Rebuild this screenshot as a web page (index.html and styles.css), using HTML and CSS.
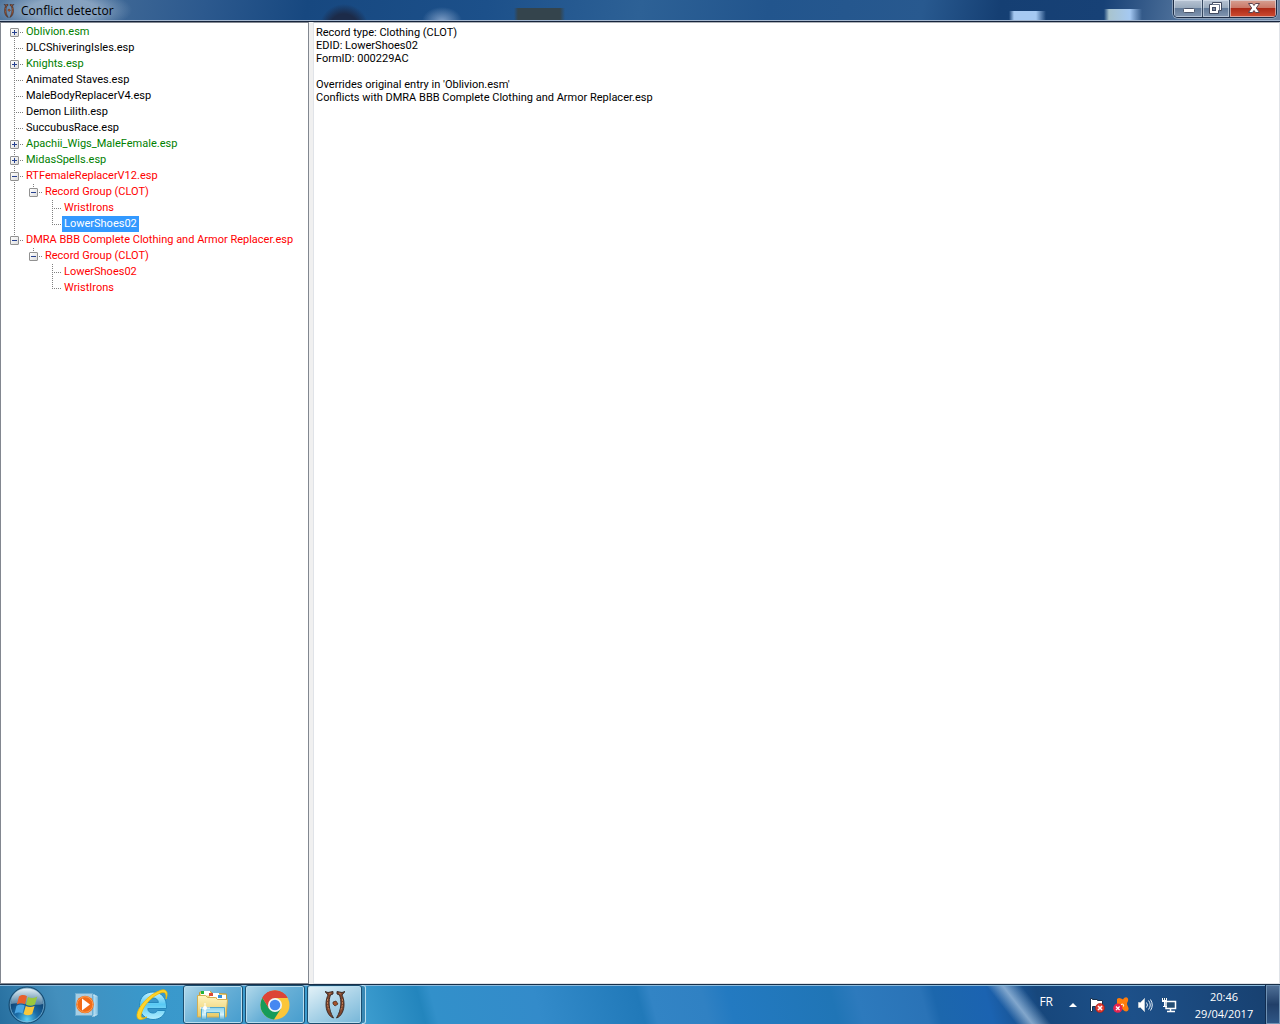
FILE: index.html
```html
<!DOCTYPE html>
<html lang="en">
<head>
<meta charset="utf-8">
<title>Conflict detector</title>
<link rel="stylesheet" href="styles.css">
</head>
<body>
<header class="titlebar">
  <svg class="app-icon" width="12" height="14" viewBox="0 0 20 28"><use href="#gate"/></svg>
  <h1>Conflict detector</h1>
  <div class="window-controls">
    <button class="minimize" aria-label="Minimize"><svg width="28" height="17"><rect x="9.5" y="8.5" width="11" height="4" rx="1" fill="#fff" stroke="#4c566b"/></svg></button>
    <button class="restore" aria-label="Restore"><svg width="26" height="17"><path d="M9.500 2.500h9v8h-3v3h-9v-9h3z" fill="#fff" stroke="#414a60"/><path d="M9 4.500h7.500v6" fill="none" stroke="#69748a"/><rect x="9.500" y="7.500" width="3" height="3" fill="#7d8ba4" stroke="#414a60"/></svg></button>
    <button class="close" aria-label="Close"><svg width="46" height="17"><path d="M18.500 3.500h4l1.500 2 1.500-2h4l-3.200 4.500 3.200 4.500h-4l-1.500-2-1.500 2h-4l3.200-4.500z" fill="#fff" stroke="#5c4450"/></svg></button>
  </div>
</header>

<main class="workspace">
  <nav class="tree" aria-label="Plugins">
    <ul>
      <li class="safe"><div class="row"><span class="guide first"><button class="toggle plus" aria-label="Expand"></button></span><span class="label">Oblivion.esm</span></div></li>
      <li><div class="row"><span class="guide"></span><span class="label">DLCShiveringIsles.esp</span></div></li>
      <li class="safe"><div class="row"><span class="guide"><button class="toggle plus" aria-label="Expand"></button></span><span class="label">Knights.esp</span></div></li>
      <li><div class="row"><span class="guide"></span><span class="label">Animated Staves.esp</span></div></li>
      <li><div class="row"><span class="guide"></span><span class="label">MaleBodyReplacerV4.esp</span></div></li>
      <li><div class="row"><span class="guide"></span><span class="label">Demon Lilith.esp</span></div></li>
      <li><div class="row"><span class="guide"></span><span class="label">SuccubusRace.esp</span></div></li>
      <li class="safe"><div class="row"><span class="guide"><button class="toggle plus" aria-label="Expand"></button></span><span class="label">Apachii_Wigs_MaleFemale.esp</span></div></li>
      <li class="safe"><div class="row"><span class="guide"><button class="toggle plus" aria-label="Expand"></button></span><span class="label">MidasSpells.esp</span></div></li>
      <li class="conflict"><div class="row"><span class="guide"><button class="toggle" aria-label="Collapse"></button></span><span class="label">RTFemaleReplacerV12.esp</span></div>
        <ul class="nested continued">
          <li><div class="row"><span class="guide last"><button class="toggle" aria-label="Collapse"></button></span><span class="label">Record Group (CLOT)</span></div>
            <ul class="nested">
              <li><div class="row"><span class="guide"></span><span class="label">WristIrons</span></div></li>
              <li><div class="row"><span class="guide last"></span><span class="label selected">LowerShoes02</span></div></li>
            </ul>
          </li>
        </ul>
      </li>
      <li class="conflict"><div class="row"><span class="guide last"><button class="toggle" aria-label="Collapse"></button></span><span class="label">DMRA BBB Complete Clothing and Armor Replacer.esp</span></div>
        <ul class="nested">
          <li><div class="row"><span class="guide last"><button class="toggle" aria-label="Collapse"></button></span><span class="label">Record Group (CLOT)</span></div>
            <ul class="nested">
              <li><div class="row"><span class="guide"></span><span class="label">LowerShoes02</span></div></li>
              <li><div class="row"><span class="guide last"></span><span class="label">WristIrons</span></div></li>
            </ul>
          </li>
        </ul>
      </li>
    </ul>
  </nav>
  <section class="details" aria-label="Record details">
    <p>Record type: Clothing (CLOT)<br>EDID: LowerShoes02<br>FormID: 000229AC</p>
    <p>Overrides original entry in 'Oblivion.esm'<br>Conflicts with DMRA BBB Complete Clothing and Armor Replacer.esp</p>
  </section>
</main>

<footer class="taskbar">
  <button class="start" aria-label="Start">
    <svg width="38" height="38" viewBox="0 0 38 38">
      <defs>
        <radialGradient id="orb" cx=".5" cy=".9" r=".85"><stop offset="0" stop-color="#5cd0f4"/><stop offset=".35" stop-color="#1c6da8"/><stop offset=".7" stop-color="#0f4677"/><stop offset="1" stop-color="#4b7898"/></radialGradient>
        <linearGradient id="shine" x2="0" y2="1"><stop offset="0" stop-color="#e4f0f6"/><stop offset="1" stop-color="#8eb2c9" stop-opacity=".55"/></linearGradient>
      </defs>
      <circle cx="19" cy="19" r="18" fill="url(#orb)" stroke="#164a70"/>
      <circle cx="19" cy="19" r="16.800" fill="none" stroke="#8ac2dd" stroke-opacity=".7"/>
      <path d="M3 18C3 8 10 2.500 19 2.500S35 8 35 18C26 21 12 15 3 18z" fill="url(#shine)"/>
      <path d="M11 10.500c3-2 5.500-1.600 8-.2l-2 8c-2.900-1.300-5.300-1.300-8.200.3z" fill="#e8602c"/>
      <path d="M20 11c2.700 1.400 5.600 1.500 9.300-.5l-2.400 8.100c-3.100 1.700-5.700 1.500-8.900.1z" fill="#9bc83e"/>
      <path d="M8.500 19.700c3-1.600 5.400-1.500 8.200-.1l-2.200 8c-2.600-1.400-5.100-1.500-8 .1z" fill="#4aa5e3"/>
      <path d="M17.700 19.900c2.900 1.500 5.800 1.500 8.900 0l-2.400 8.200c-3.200 1.700-5.800 1.500-8.700-.1z" fill="#fac83c"/>
    </svg>
  </button>
  <button class="launcher" aria-label="Media player">
    <svg width="24" height="28" viewBox="0 0 24 28">
      <path d="M19 5h3v19h-3z" fill="#6db7df" stroke="#b5dcef"/><path d="M17 4h3v21h-3z" fill="#8dc9e8" stroke="#d3eaf5"/>
      <rect x=".5" y="2.500" width="17" height="22" fill="#a8cee3" stroke="#6caed3"/>
      <circle cx="10" cy="13.500" r="8.800" fill="#f26b17"/><circle cx="10" cy="13.500" r="7.800" fill="none" stroke="#fb9d50"/>
      <path d="M7 7.500l8 6-8 6z" fill="#fff"/>
    </svg>
  </button>
  <button class="launcher wide" aria-label="Internet Explorer">
    <svg width="34" height="34" viewBox="0 0 34 34">
      <defs><linearGradient id="ie" x2="0" y2="1"><stop offset="0" stop-color="#c3f2ff"/><stop offset=".45" stop-color="#58c9f4"/><stop offset="1" stop-color="#b4efff"/></linearGradient></defs>
      <path d="M18 4C10 4 4.500 9.500 4.500 17.500S10 31.500 18 31.500c6.500 0 11-3.300 12.500-9h-8c-1 1.700-2.500 2.500-4.500 2.500-3.200 0-5-1.600-5.200-4.500H31.500C32 10 26.500 4 18 4zM13 14.500c.5-3 2.400-4.500 5.200-4.500s4.800 1.500 5.200 4.500z" fill="url(#ie)" fill-rule="evenodd" stroke="#2488bd"/>
      <path d="M31 11C34 4 31 .2 25 2.500 13 7 3 19 2 26.500c-.5 6.500 4.500 6 10 2.500-5 2-7 .8-5.500-4C9 16.500 18 7.500 26 4.800 30.500 3.300 31.500 6 31 11z" fill="#ffd42c" stroke="#f0b800" stroke-width=".8"/>
    </svg>
  </button>
  <button class="task" aria-label="Windows Explorer">
    <svg width="34" height="32" viewBox="0 0 34 32">
      <defs><linearGradient id="fold" x2="0" y2="1"><stop offset="0" stop-color="#fff5bf"/><stop offset="1" stop-color="#e9ca68"/></linearGradient><linearGradient id="stand" x2="0" y2="1"><stop offset="0" stop-color="#8ed4ed"/><stop offset=".6" stop-color="#d8f4fb"/><stop offset="1" stop-color="#5caed5"/></linearGradient></defs>
      <path d="M3.500 27V3.500l2-1h9l2 2h6l8 .5v22z" fill="#f2d880" stroke="#c59c3c"/>
      <path d="M5 6.500V2h9v4.500zM14 8V4h9v4zM21 10V6h9v4z" fill="#fff"/>
      <path d="M5 2h3v3H5z" fill="#20b338"/><path d="M13 4h4v3h-4z" fill="#db4934"/><path d="M22 6h4v3h-4z" fill="#2e91df"/>
      <path d="M1.500 28V6.500h8l2 2h8l2 2h10L30 28z" fill="url(#fold)" stroke="#d1ae55"/>
      <path d="M5.500 30.500V18.500h23v12h-5v-7h-13v7z" fill="url(#stand)" stroke="#53a9ce"/>
      <path d="M9 14v10M4 19h10" stroke="#fff"/><circle cx="9" cy="19" r="2" fill="#fff"/>
    </svg>
  </button>
  <button class="task" aria-label="Chrome">
    <svg width="30" height="30" viewBox="0 0 30 30">
      <circle cx="15" cy="15" r="14.500" fill="#fbc63a"/>
      <path d="M15 15L2.400 7.800A14.500 14.500 0 0 1 27.600 8L15 8z" fill="#dc4437"/>
      <path d="M2.400 7.800A14.500 14.500 0 0 0 14 29.500L21 18.500 15 15 8.800 18z" fill="#169b59"/>
      <path d="M2.400 7.800L9 18.500 15 8h12.600A14.500 14.500 0 0 0 2.400 7.800z" fill="#dc4437"/>
      <circle cx="15" cy="15" r="7" fill="#f1f5f7"/><circle cx="15" cy="15" r="5.300" fill="#4688f1"/>
    </svg>
  </button>
  <button class="task active" aria-label="Conflict detector">
    <svg width="20" height="28" viewBox="0 0 20 28">
      <g id="gate" stroke-linejoin="round">
        <path d="M0 .5l3 1 5-1v2.500l-2.500 1C3.500 9 3 18 8.500 27 3.500 25.500.8 19 1 13 1 9 2 6 3 4zM20 .5l-3 1-5-1v2.500l2.500 1C16.500 9 17 18 11.500 27 16.500 25.500 19.200 19 19 13 19 9 18 6 17 4z" fill="#81472e" stroke="#33241f" stroke-width=".9"/>
        <path d="M2.500 8v6l2 6M17.500 8v6l-2 6M4 3l2-1M14 2l2 1" stroke="#bc7950" fill="none" stroke-dasharray="2 1"/>
        <path d="M8 11l3-1 2 3-3 2-2-2z" fill="#a5532b" stroke="#42251a" stroke-width=".7"/>
      </g>
    </svg>
  </button>
  <span class="stack-edge"></span>
  <div class="tray">
    <span class="language">FR</span>
    <button class="arrow" aria-label="Show hidden icons"><svg width="8" height="5"><path d="M0 5l4-4 4 4z" fill="#fff"/></svg></button>
    <button aria-label="Action Center"><svg width="16" height="16" viewBox="0 0 16 16"><path d="M1.500 1.500h2v1h5v1h5v7h-7v-1h-3v5h-2z" fill="#fff" stroke="#17314e"/><circle cx="11" cy="11" r="4.500" fill="#e33b2f" stroke="#991c18" stroke-width=".7"/><path d="M9 9l4 4M13 9l-4 4" stroke="#fff" stroke-width="1.600"/></svg></button>
    <button aria-label="Avast"><svg width="16" height="16" viewBox="0 0 16 16"><path d="M4 2c2-2 4-.5 6 .5C12-1 16 0 15 4c-2 3-.5 4 .5 7 .5 3-2 4-4 3L9 12l-5 2-2-4 2-2z" fill="#ff7d0b"/><path d="M8 7.500c2-.8 3-.2 2.500 2" stroke="#fff" fill="none"/><circle cx="4.800" cy="11.200" r="4.600" fill="#e52451"/><path d="M3 9.500l3.600 3.600M6.600 9.500L3 13.100" stroke="#fff" stroke-width="1.300"/></svg></button>
    <button aria-label="Volume"><svg width="16" height="16" viewBox="0 0 16 16"><path d="M1.500 5.500h2l4-4v13l-4-4h-2z" fill="#fff" stroke="#bac7d2"/><path d="M9.500 5.500q2 2.500 0 5M11.500 3.500q3.500 4.500 0 9M13.500 2.500q3.500 5.500 0 11" fill="none" stroke="#e7f0f8"/></svg></button>
    <button aria-label="Network"><svg width="16" height="16" viewBox="0 0 16 16"><path d="M5 4.500h9.500v7H5zM9.500 12v2M6 14.500h8" fill="#244d73" stroke="#fff" stroke-width="1.500"/><path d="M1 1h5v4H1z" fill="#fff"/><path d="M2.500 0v3M4.500 0v3" stroke="#244d73"/><path d="M3.500 4v6M2 9.500h4" fill="none" stroke="#fff"/></svg></button>
    <time datetime="2017-04-29T20:46"><span>20:46</span><span>29/04/2017</span></time>
    <button class="show-desktop" aria-label="Show desktop"></button>
  </div>
</footer>
</body>
</html>
```

FILE: styles.css
```css
* { box-sizing: border-box; }
body {
  margin: 0;
  min-height: 100vh;
  display: flex;
  flex-direction: column;
  font-family: Roboto, "Liberation Sans", Arial, sans-serif;
  font-size: 11px;
  color: #000;
}
button { margin: 0; padding: 0; border: 0; background: none; }
svg { display: block; }
ul { list-style: none; margin: 0; padding: 0; }

.titlebar {
  height: 22px;
  display: flex;
  align-items: flex-start;
  gap: 6px;
  padding-left: 3px;
  border-bottom: 1px solid #16243c;
  box-shadow: inset 0 -1px #a3b6ce;
  background:
    radial-gradient(ellipse 68px 22px at 64px 10px, rgba(200, 215, 230, .5) 50%, transparent),
    radial-gradient(circle 25px at 344px 29px, #1c2b49 60%, transparent),
    radial-gradient(ellipse 20px 14px at 442px 21px, #7d9dc5, transparent),
    linear-gradient(90deg, transparent 514px, #34444c 518px 560px, transparent 565px) 0 8px / 100% 13px no-repeat,
    linear-gradient(90deg, transparent 1009px, #a5c9f2 1014px 1036px, transparent 1046px) 0 11px / 100% 10px no-repeat,
    linear-gradient(90deg, transparent 1104px, #a9c4ce 1109px, #a5c9f2 1130px, transparent 1142px) 0 9px / 100% 12px no-repeat,
    linear-gradient(100deg, #54799f 0, #2c598e 16%, #174880 24%, #1c508a 38%, #2d6196 50%, #22558d 60%, #28598f 72%, #153f73 78%, #174176 86%, #6080a6 94%, #6c829f 100%);
}
.app-icon { margin-top: 4px; }
h1 { margin: 3px 0 0; font: 12px/16px "Open Sans", "Noto Sans", sans-serif; }
.window-controls {
  display: flex;
  margin-left: auto;
  margin-right: 3px;
  height: 18px;
  border: 1px solid #1d2c45;
  border-top: 0;
  border-radius: 0 0 5px 5px;
  overflow: hidden;
  box-shadow: 0 0 0 1px #8ca1ba;
}
.window-controls button {
  height: 17px;
  background: linear-gradient(#b8c4d3, #99aabd 46%, #637b99 50%, #8296b0);
  box-shadow: inset 0 0 0 1px rgba(225, 235, 245, .55);
}
.window-controls button + button { border-left: 1px solid #35475f; }
.window-controls .close { background: linear-gradient(#d7a092, #ca7867 46%, #ad2a17 50%, #cf4c31); }

.workspace { flex: 1; display: flex; background: #f0f0f0; }
.tree {
  flex: 0 0 309px;
  padding: 1px 0 0 4px;
  background: #fff;
  border: 1px solid #828790;
  white-space: nowrap;
}
.row { display: flex; height: 16px; line-height: 16px; }
.nested { padding-left: 19px; }
.continued {
  background: repeating-linear-gradient(#808080 0 1px, transparent 1px 2px) 9px 0 / 1px 100% no-repeat;
}
.guide {
  flex: 0 0 19px;
  padding: 4px 0 0 5px;
  background:
    repeating-linear-gradient(#808080 0 1px, transparent 1px 2px) 9px 0 / 1px 16px no-repeat,
    repeating-linear-gradient(90deg, #808080 0 1px, transparent 1px 2px) 9px 8px / 10px 1px no-repeat;
}
.guide.last { background-size: 1px 9px, 10px 1px; }
.guide.first { background-position: 9px 8px, 9px 8px; background-size: 1px 8px, 10px 1px; }
.toggle {
  display: block;
  width: 9px;
  height: 9px;
  border: 1px solid #919191;
  border-radius: 1px;
  background:
    linear-gradient(#27418f, #27418f) center / 5px 1px no-repeat,
    linear-gradient(135deg, #fff, #ddd);
}
.toggle.plus {
  background:
    linear-gradient(#27418f, #27418f) center / 5px 1px no-repeat,
    linear-gradient(#27418f, #27418f) center / 1px 5px no-repeat,
    linear-gradient(135deg, #fff, #ddd);
}
.label { padding: 0 2px; }
.safe { color: #008000; }
.conflict { color: #f00; }
.selected { background: #39f; color: #fff; }
.details {
  flex: 1;
  margin-left: 4px;
  padding: 3px 2px;
  border: 1px solid #e0e3e8;
  border-top-color: #aeb2b8;
  background: #fff;
  line-height: 13px;
}
.details p { margin: 0 0 13px; }

.taskbar {
  height: 40px;
  display: flex;
  align-items: stretch;
  border-top: 1px solid #182f48;
  box-shadow: inset 0 1px #8cbadb;
  background:
    linear-gradient(52deg, transparent calc(100% - 232px), rgba(165, 195, 224, .75) calc(100% - 219px), transparent calc(100% - 204px)) no-repeat,
    linear-gradient(75deg, #276f9f 0, #438fbd 5%, #3998cb 12%, #3e9ed0 28%, #2385bd 33%, #3290ca 34%, #338bca 42%, #2179b9 50%, #3284c5 51%, #3081c3 55%, #237ac1 57%, #2075b6 65%, #2d7abd 67%, #2a73b7 72%, #1c67ad 73%, #1b63b1 77%, #17477c 81%, #1d5089 88%, #173f6e 100%);
}
.taskbar button { display: flex; align-items: center; justify-content: center; }
.start { width: 54px; }
.launcher { width: 66px; }
.launcher.wide { width: 63px; }
.taskbar .task {
  width: 60px;
  margin-right: 2px;
  border: 1px solid #1b4e70;
  border-radius: 3px;
  background: linear-gradient(135deg, #b2d9eb, #67afd6 50%, #469dce);
  box-shadow: inset 0 0 0 1px #b9deef;
}
.taskbar .task.active { width: 55px; margin-right: 0; background: linear-gradient(150deg, #e4f2f8, #aad3e8 50%, #76b6d8); }
.stack-edge { width: 4px; border: 1px solid #b9deef; border-left: 0; border-radius: 0 3px 3px 0; background: #3a88b3; }
.tray {
  display: flex;
  align-items: center;
  gap: 8px;
  margin-left: auto;
  color: #fff;
  font: 11px/17px "Open Sans", "Noto Sans", sans-serif;
}
.language { margin-bottom: 6px; padding-right: 8px; font-size: 12px; }
.arrow { padding-right: 4px; }
time { display: flex; flex-direction: column; width: 73px; text-align: center; padding-left: 5px; }
.show-desktop {
  align-self: stretch;
  width: 14px;
  border: 1px solid #6f91b3;
  background: linear-gradient(#4f6f96, #213f69 50%, #2f5685);
  box-shadow: -1px 0 #102c50;
}
```
